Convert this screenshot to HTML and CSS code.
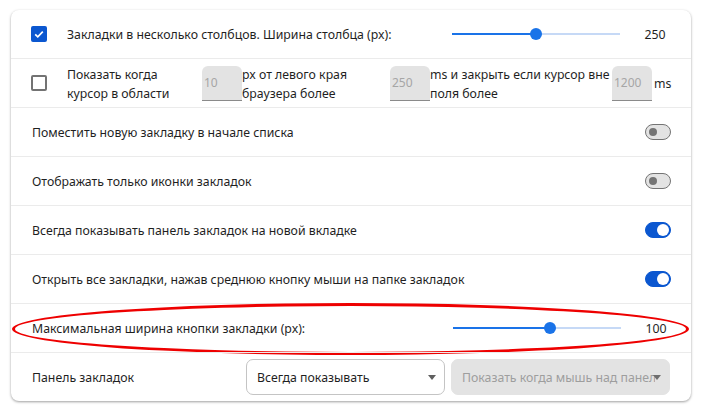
FILE: index.html
```html
<!DOCTYPE html>
<html lang="ru">
<head>
<meta charset="utf-8">
<link rel="stylesheet" href="styles.css">
</head>
<body>
<div class="page">
  <div class="card">
    <div class="row check-row">
      <span class="cb checked"><svg width="12" height="12" viewBox="0 0 12 12"><path d="M2.2 6.3 L4.8 8.8 L9.8 3.6" fill="none" stroke="#fff" stroke-width="1.7"/></svg></span>
      <span class="label grow">Закладки в несколько столбцов. Ширина столбца (px):</span>
      <div class="slider"><div class="fill" style="width:84px"></div><div class="thumb" style="left:84px"></div></div>
      <span class="value">250</span>
    </div>
    <div class="row check-row row2">
      <span class="cb"></span>
      <span class="t t1">Показать когда<br>курсор в области</span>
      <span class="num">10</span>
      <span class="t t2">px от левого края<br>браузера более</span>
      <span class="num">250</span>
      <span class="t t3">ms и закрыть если курсор вне<br>поля более</span>
      <span class="num">1200</span>
      <span class="t t4">ms</span>
    </div>
    <div class="row plain">
      <span class="label grow">Поместить новую закладку в начале списка</span>
      <span class="tg"></span>
    </div>
    <div class="row plain">
      <span class="label grow">Отображать только иконки закладок</span>
      <span class="tg"></span>
    </div>
    <div class="row plain">
      <span class="label grow">Всегда показывать панель закладок на новой вкладке</span>
      <span class="tg on"></span>
    </div>
    <div class="row plain">
      <span class="label grow">Открыть все закладки, нажав среднюю кнопку мыши на папке закладок</span>
      <span class="tg on"></span>
    </div>
    <div class="row plain slider-row">
      <span class="label grow">Максимальная ширина кнопки закладки (px):</span>
      <div class="slider"><div class="fill" style="width:97px"></div><div class="thumb" style="left:97px"></div></div>
      <span class="value">100</span>
      <span class="ellipse"></span>
    </div>
    <div class="row plain select-row">
      <span class="label panel-label">Панель закладок</span>
      <div class="select"><span class="sel-text">Всегда показывать</span><span class="arrow"></span></div>
      <div class="select disabled"><span class="sel-text">Показать когда мышь над панелью</span><span class="arrow"></span></div>
    </div>
  </div>
</div>
</body>
</html>
```
FILE: styles.css
```css
* { box-sizing: border-box; }
html, body { margin: 0; padding: 0; background: #fff; }
body {
  font-family: "Noto Sans", "Segoe UI", "Liberation Sans", sans-serif;
  font-size: 12.3px;
  color: #1f1f1f;
}
.page { padding: 10px 10px 9px 11px; }
.card {
  width: 680px;
  background: #fff;
  border-radius: 8px;
  box-shadow: 0 1px 3px rgba(0,0,0,0.28), 0 1px 2px rgba(0,0,0,0.12);
  overflow: visible;
}
.row {
  display: flex;
  align-items: center;
  height: 49px;
  border-top: 1px solid #ebebeb;
  position: relative;
}
.row:first-child { border-top: none; height: 48px; }
.check-row { padding-left: 20px; }
.plain { padding-left: 21px; padding-right: 20px; }
.grow { flex: 1; white-space: nowrap; }
.cb {
  width: 16px; height: 16px;
  border: 2px solid #737373;
  border-radius: 2px;
  margin-right: 20px;
  flex: none;
  display: flex; align-items: center; justify-content: center;
}
.cb.checked { background: #0b57d0; border-color: #0b57d0; }
.slider {
  position: relative;
  width: 168px;
  height: 2px;
  background: #c6d9f6;
  flex: none;
}
.slider .fill { position: absolute; left: 0; top: 0; height: 2px; background: #1a73e8; }
.slider .thumb {
  position: absolute; top: -5px;
  width: 12px; height: 12px; margin-left: -6px;
  border-radius: 50%; background: #1a73e8;
}
.check-row .value { width: 48px; margin-left: 11px; margin-right: 12px; text-align: center; }
.slider-row .value { width: 50px; margin-left: 10px; margin-right: -10px; text-align: center; }
.t { line-height: 19px; white-space: nowrap; padding-top: 2px; }
.t1 { width: 135px; flex: none; }
.t2 { width: 148px; flex: none; }
.t3 { width: 182px; flex: none; }
.t4 { margin-left: 2px; padding-top: 0; }
.num {
  width: 40px; height: 35px; flex: none;
  background: #e3e3e3;
  border-radius: 6px 6px 0 0;
  border-bottom: 1px solid #8a8a8a;
  color: #a6a6a6;
  display: flex; align-items: center;
  padding-left: 2px;
  font-size: 12px;
}
.tg {
  width: 26px; height: 16px; flex: none;
  border-radius: 8px;
  border: 1px solid #747474;
  background: #e3e3e3;
  position: relative;
}
.tg::after {
  content: ""; position: absolute;
  left: 3px; top: 3px; width: 8px; height: 8px;
  border-radius: 50%; background: #747474;
}
.tg.on { background: #0b57d0; border-color: #0b57d0; }
.tg.on::after { left: 11px; top: 1px; width: 12px; height: 12px; background: #fff; }
.ellipse {
  position: absolute;
  left: 1px; top: -1px;
  width: 677px; height: 52px;
  border: 3px solid #ee0000;
  border-radius: 50%;
  pointer-events: none;
}
.select-row { padding-right: 21px; }
.panel-label { width: 214px; flex: none; }
.select {
  height: 36px; flex: none;
  border-radius: 7px;
  border: 1px solid #c4c4c4;
  display: flex; align-items: center;
  padding: 0 8px 0 10px;
  position: relative;
  overflow: hidden;
  white-space: nowrap;
}
.select:first-of-type { width: 199px; }
.select.disabled { width: 219px; margin-left: 6px; background: #e3e3e3; border-color: #e3e3e3; color: #9e9e9e; padding-right: 14px; }
.sel-text { flex: 1; overflow: hidden; }
.arrow {
  width: 0; height: 0; flex: none;
  border-left: 4px solid transparent;
  border-right: 4px solid transparent;
  border-top: 5px solid #5f5f5f;
  margin-left: 4px;
}
.select.disabled .arrow { border-top-color: #6e6e6e; position: absolute; right: 8px; }
```
